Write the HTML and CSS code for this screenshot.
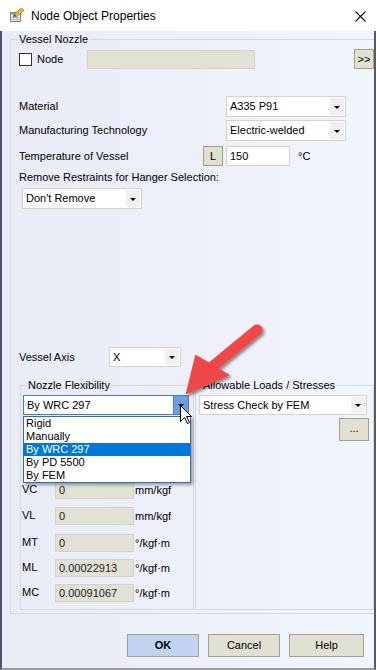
FILE: index.html
```html
<!DOCTYPE html>
<html>
<head>
<meta charset="utf-8">
<link rel="stylesheet" href="styles.css">
</head>
<body>
<div class="window">
  <div class="titlebar">
    <svg class="app-icon" width="16" height="16" viewBox="0 0 16 16">
      <rect x="1.5" y="5.5" width="10" height="9" fill="#f3f3f3" stroke="#7d7d7d"/>
      <rect x="1.5" y="5.5" width="10" height="2" fill="#9a9a9a"/>
      <path d="M1.5 10.5h10M1.5 12.5h10M5 7.5v7M8 7.5v7" stroke="#b5b5b5" stroke-width="1" fill="none"/>
      <polygon points="5,7 12.5,1 15,3.5 7.5,9.5" fill="#e8b43c" stroke="#a47619" stroke-width="0.8"/>
      <polygon points="5,7 7.5,9.5 4,10" fill="#5b4a2a"/>
    </svg>
    <span class="title">Node Object Properties</span>
    <svg class="close" width="11" height="11" viewBox="0 0 11 11">
      <path d="M0.5 0.5L10.5 10.5M10.5 0.5L0.5 10.5" stroke="#111" stroke-width="1.1" fill="none"/>
    </svg>
  </div>
  <div class="client">
    <fieldset class="group outer">
      <legend class="legend-outer">Vessel Nozzle</legend>

      <div class="row row-node">
        <span class="check"></span>
        <span class="node-lbl">Node</span>
        <span class="tb dis node-box"></span>
        <span class="btn more">&gt;&gt;</span>
      </div>

      <div class="row row-combo first">
        <span class="lbl wide">Material</span>
        <div class="combo w120"><span class="combo-text">A335 P91</span><span class="combo-btn"><i class="tri"></i></span></div>
      </div>

      <div class="row row-combo">
        <span class="lbl wide">Manufacturing Technology</span>
        <div class="combo w120"><span class="combo-text">Electric-welded</span><span class="combo-btn"><i class="tri"></i></span></div>
      </div>

      <div class="row row-temp">
        <span class="lbl narrow">Temperature of Vessel</span>
        <span class="btn lbtn">L</span>
        <span class="tb white temp-box">150</span>
        <span class="unit-c">°C</span>
      </div>

      <div class="remove-lbl">Remove Restraints for Hanger Selection:</div>

      <div class="row row-remove">
        <div class="combo w120"><span class="combo-text">Don't Remove</span><span class="combo-btn"><i class="tri"></i></span></div>
      </div>

      <div class="row row-axis">
        <span class="lbl axis-lbl">Vessel Axis</span>
        <div class="combo w72"><span class="combo-text">X</span><span class="combo-btn"><i class="tri"></i></span></div>
      </div>

      <div class="inner-row">
        <fieldset class="group nozzle">
          <legend class="legend-inner">Nozzle Flexibility</legend>
          <div class="combo-wrap">
            <div class="combo active w166"><span class="combo-text">By WRC 297</span><span class="combo-btn"><i class="tri"></i></span></div>
            <ul class="droplist">
              <li>Rigid</li>
              <li>Manually</li>
              <li class="sel">By WRC 297</li>
              <li>By PD 5500</li>
              <li>By FEM</li>
            </ul>
          </div>
          <div class="frow r1"><span class="flbl">VC</span><span class="tb dis fbox">0</span><span class="unit">mm/kgf</span></div>
          <div class="frow r2"><span class="flbl">VL</span><span class="tb dis fbox">0</span><span class="unit">mm/kgf</span></div>
          <div class="frow r3"><span class="flbl">MT</span><span class="tb dis fbox">0</span><span class="unit">°/kgf·m</span></div>
          <div class="frow r4"><span class="flbl">ML</span><span class="tb dis fbox">0.00022913</span><span class="unit">°/kgf·m</span></div>
          <div class="frow r5"><span class="flbl">MC</span><span class="tb dis fbox">0.00091067</span><span class="unit">°/kgf·m</span></div>
        </fieldset>
        <fieldset class="group allow">
          <legend class="legend-inner">Allowable Loads / Stresses</legend>
          <div class="combo w168 stress"><span class="combo-text">Stress Check by FEM</span><span class="combo-btn"><i class="tri"></i></span></div>
          <span class="btn dots">...</span>
        </fieldset>
      </div>
    </fieldset>

    <div class="buttons">
      <span class="btn dlg ok">OK</span>
      <span class="btn dlg">Cancel</span>
      <span class="btn dlg help">Help</span>
    </div>
  </div>

  <svg class="overlay" width="376" height="670" viewBox="0 0 376 670">
    <defs>
      <filter id="sh" x="-30%" y="-30%" width="160%" height="160%">
        <feGaussianBlur in="SourceAlpha" stdDeviation="1.6"/>
        <feOffset dx="2" dy="2" result="o"/>
        <feComponentTransfer><feFuncA type="linear" slope="0.45"/></feComponentTransfer>
        <feMerge><feMergeNode/><feMergeNode in="SourceGraphic"/></feMerge>
      </filter>
    </defs>
    <g filter="url(#sh)">
      <line x1="257" y1="330" x2="212" y2="367" stroke="#f04646" stroke-width="11" stroke-linecap="round"/>
      <polygon points="187,393 196,356 228,375" fill="#f04646" stroke="#f04646" stroke-width="2" stroke-linejoin="round"/>
    </g>
    <polygon points="180.5,405.5 180.5,421.5 184.5,417.5 187.5,423.5 189.5,422.5 186.5,416.5 191.5,416.5" fill="#fff" stroke="#000" stroke-width="1" stroke-linejoin="miter"/>
  </svg>
</div>
</body>
</html>
```

FILE: styles.css
```css
* { box-sizing: border-box; }
html, body { margin: 0; padding: 0; }
body {
  font-family: "Liberation Sans", Arial, sans-serif;
  font-size: 11px;
  color: #000;
  background: #fff;
}
.window {
  position: relative;
  width: 376px;
  height: 670px;
  overflow: hidden;
  display: flex;
  flex-direction: column;
  background: #fff;
}
.titlebar {
  flex: 0 0 31px;
  height: 31px;
  display: flex;
  align-items: center;
  padding-left: 9px;
  background: #fff;
}
.app-icon { display: block; margin-top: -1px; }
.title {
  margin-left: 6px;
  font-size: 12px;
  line-height: 16px;
  color: #000;
}
.close { margin-left: auto; margin-right: 10px; margin-top: 1px; display: block; }

.client {
  flex: 1;
  border-left: 2px solid #52526a;
  border-right: 2px solid #5a5a5a;
  border-bottom: 2px solid #9c9c9c;
  background: linear-gradient(to right, #e9ebf7, #f1f5fc);
  overflow: hidden;
}

fieldset.group {
  border: 1px solid #d5d8df;
  margin: 0;
  padding: 0;
  min-width: 0;
}
legend {
  padding: 0 1px;
  line-height: 13px;
  height: 13px;
}
.outer {
  margin: 2px 0 0 8px !important;
  width: 372px;
  padding-bottom: 3px !important;
}
.legend-outer { margin-left: 7px; }
.legend-inner { margin-left: 6px; }

.row { display: flex; align-items: center; }
.row-node { height: 20px; margin-top: 3px; padding-left: 8px; }
.check {
  width: 13px; height: 13px;
  background: #fff;
  border: 1px solid #333;
  flex: 0 0 13px;
}
.node-lbl { width: 55px; padding-left: 5px; line-height: 13px; }
.node-box { width: 168px; height: 19px; }
.more { width: 20px; height: 20px; margin-left: 99px; font-size: 11px; }

.lbl { line-height: 13px; white-space: nowrap; }
.lbl.wide { width: 207px; }
.lbl.narrow { width: 184px; }
.row-combo { height: 21px; padding-left: 8px; margin-top: 3px; }
.row-combo.first { margin-top: 27px; }
.row-temp { height: 20px; padding-left: 8px; margin-top: 5px; }
.lbtn { width: 20px; height: 20px; }
.temp-box { width: 64px; height: 20px; margin-left: 3px; }
.unit-c { margin-left: 8px; line-height: 13px; }

.remove-lbl { margin-top: 5px; padding-left: 8px; line-height: 13px; height: 13px; white-space: nowrap; }
.row-remove { margin-top: 4px; padding-left: 11px; height: 21px; }
.row-axis { margin-top: 138px; padding-left: 8px; height: 20px; }
.axis-lbl { width: 90px; }

/* controls */
.tb {
  display: flex;
  align-items: center;
  padding-left: 3px;
  line-height: 13px;
}
.tb.dis { background: #e1e1d5; border: 1px solid #d3d3c4; color: #222; }
.tb.white { background: #fff; border: 1px solid #d6d3c3; }
.btn {
  display: flex;
  align-items: center;
  justify-content: center;
  background: #e1e1d3;
  border: 1px solid #a3a28e;
  line-height: 13px;
}
.combo {
  display: flex;
  align-items: stretch;
  height: 21px;
  background: #fff;
  border: 1px solid #d6d3c3;
  padding: 1px;
}
.combo.w120 { width: 120px; }
.combo.w72 { width: 72px; height: 20px; }
.combo.w166 { width: 166px; height: 20px; }
.combo.w168 { width: 168px; height: 20px; }
.combo-text {
  flex: 1;
  display: flex;
  align-items: center;
  padding-left: 2px;
  white-space: nowrap;
  line-height: 13px;
}
.combo-btn {
  flex: 0 0 14px;
  background: #eff0f4;
  display: flex;
  align-items: center;
  justify-content: center;
}
.tri {
  display: block;
  width: 0; height: 0;
  border-left: 3px solid transparent;
  border-right: 3px solid transparent;
  border-top: 3px solid #000;
  margin-top: 1px;
}
.combo.active { border-color: #3f7fcc; }
.combo.active .combo-btn {
  background: #6e9edd;
  margin: -1px -1px -1px 0;
  flex-basis: 15px;
  border-left: 1px solid #3f7fcc;
}

/* inner groups */
.inner-row { display: flex; gap: 1px; margin-top: 12px; margin-left: 9px; }
.nozzle { width: 174px; height: 231px; }
.allow { width: 179px; height: 231px; }

.combo-wrap { position: relative; margin-top: 3px; margin-left: 2px; width: 166px; }
.droplist {
  position: absolute;
  top: 21px;
  left: 0;
  width: 168px;
  margin: 0;
  padding: 0;
  list-style: none;
  background: #fff;
  border: 1px solid #2f6fba;
  box-shadow: 2px 2px 3px rgba(0, 0, 0, 0.35);
  z-index: 2;
}
.droplist li { height: 13px; line-height: 13px; padding-left: 2px; white-space: nowrap; }
.droplist li.sel { background: #0078d7; color: #fff; }

.frow { display: flex; align-items: center; height: 18px; padding-left: 1px; }
.frow.r1 { margin-top: 66px; }
.frow.r2 { margin-top: 8px; }
.frow.r3 { margin-top: 9px; }
.frow.r4 { margin-top: 7px; }
.frow.r5 { margin-top: 7px; }
.flbl { width: 33px; line-height: 13px; margin-top: -2px; }
.fbox { width: 79px; height: 18px; }
.unit { margin-left: 1px; line-height: 13px; white-space: nowrap; }

.stress { margin-top: 3px; margin-left: 3px; }
.dots { width: 30px; height: 23px; margin-top: 3px; margin-left: 143px; padding-bottom: 3px; }

.buttons { display: flex; gap: 9px; margin: 20px 0 0 125px; }
.dlg { width: 72px; height: 23px; }
.dlg.help { width: 75px; }
.dlg.ok { background: #c1d3ef; font-weight: bold; }

.overlay { position: absolute; left: 0; top: 0; pointer-events: none; z-index: 5; }
```
